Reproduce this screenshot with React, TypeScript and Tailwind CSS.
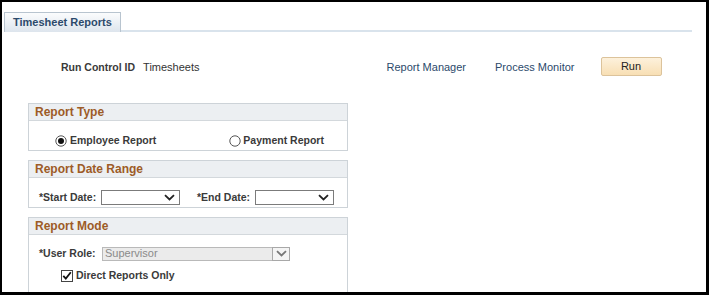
// PeopleSoft-style Timesheet Reports run control page
const font = { fontFamily: '"Liberation Sans", Arial, sans-serif' };

const Chevron = ({ color = '#222' }: { color?: string }) => (
  <svg width="11" height="7" viewBox="0 0 11 7">
    <path d="M1 1.2 L5.5 5.5 L10 1.2" fill="none" stroke={color} strokeWidth="1.8" />
  </svg>
);

const Radio = ({ checked }: { checked?: boolean }) => (
  <svg width="12" height="12" viewBox="0 0 12 12" className="shrink-0">
    <circle cx="6" cy="6" r="5.2" fill="#fff" stroke="#555" strokeWidth="1" />
    {checked && <circle cx="6" cy="6" r="3" fill="#111" />}
  </svg>
);

const Checkbox = () => (
  <svg width="12" height="12" viewBox="0 0 12 12" className="shrink-0">
    <rect x="0.5" y="0.5" width="11" height="11" fill="#fff" stroke="#444" />
    <path d="M2.3 5.8 L4.8 8.6 L9.8 2.2" fill="none" stroke="#111" strokeWidth="1.8" />
  </svg>
);

const DateSelect = () => (
  <div className="w-[79px] h-[15px] border border-[#7b7b7b] bg-white flex items-center justify-end pr-[4px]">
    <Chevron />
  </div>
);

const GroupBox = ({ title, className, children }: { title: string; className: string; children: React.ReactNode }) => (
  <div className={`w-[320px] border border-[#cdd3d8] ${className}`}>
    <div className="h-[17px] bg-[#eceff2] border-b border-[#d3d8dc] pl-[6px] flex items-center">
      <span className="text-[12px] font-bold text-[#9d5b27] leading-none">{title}</span>
    </div>
    {children}
  </div>
);

const label = 'text-[10.5px] font-bold text-[#3a3a3a]';

export default function App() {
  return (
    <div
      className="w-[709px] h-[295px] bg-white border-t-2 border-l-2 border-r-[3px] border-b-[3px] border-black overflow-hidden text-[#333]"
      style={font}
    >
      {/* Tab strip */}
      <div className="mt-[10px] flex items-end pl-[2px] pr-[14px]">
        <div className="h-[20px] px-[8px] flex items-center border border-b-0 border-[#b8c4cf] bg-gradient-to-b from-[#fbfcfd] to-[#dde5ed]">
          <span className="text-[11px] font-bold text-[#2c4a6b]">Timesheet Reports</span>
        </div>
        <div className="flex-1 h-[2px] bg-[#d9e3ec]" />
      </div>

      {/* Run control row */}
      <div className="mt-[25px] h-[19px] flex items-center pt-[2px]">
        <span className={`ml-[59px] ${label}`}>Run Control ID</span>
        <span className="ml-[8px] text-[11px] text-[#333]">Timesheets</span>
        <span className="ml-[187px] text-[11px] text-[#2c4a6b]">Report Manager</span>
        <span className="ml-[29px] text-[11px] text-[#2c4a6b]">Process Monitor</span>
        <button className="ml-[26px] -mt-[2px] w-[61px] h-[19px] border border-[#dcc39b] rounded-[2px] bg-gradient-to-b from-[#fdf1dc] to-[#f8dfb4] text-[11px] text-[#222] leading-none">
          Run
        </button>
      </div>

      <div className="ml-[26px] mt-[27px] flex flex-col">
        <GroupBox title="Report Type" className="h-[48px]">
          <div className="flex items-center pt-[12px]">
            <div className="ml-[26px] flex items-center gap-[3px]">
              <Radio checked />
              <span className={label}>Employee Report</span>
            </div>
            <div className="ml-[73px] flex items-center gap-[2px]">
              <Radio />
              <span className={label}>Payment Report</span>
            </div>
          </div>
        </GroupBox>

        <GroupBox title="Report Date Range" className="mt-[9px] h-[48px]">
          <div className="flex items-center pt-[12px]">
            <span className={`ml-[10px] w-[62px] ${label}`}>*Start Date:</span>
            <DateSelect />
            <span className={`ml-[17px] w-[58px] ${label}`}>*End Date:</span>
            <DateSelect />
          </div>
        </GroupBox>

        <GroupBox title="Report Mode" className="mt-[9px] h-[76px]">
          <div className="flex items-center pt-[11px]">
            <span className={`ml-[10px] w-[63px] ${label}`}>*User Role:</span>
            <div className="w-[188px] h-[14px] border border-[#b9b9b9] bg-[#ebebeb] flex items-center justify-between">
              <span className="pl-[2px] text-[11px] text-[#8a8a8a] leading-none">Supervisor</span>
              <div className="w-[18px] h-[14px] border border-[#a8a8a8] bg-[#f4f4f4] flex items-center justify-center -mr-px">
                <Chevron color="#777" />
              </div>
            </div>
          </div>
          <div className="flex items-center mt-[6px] ml-[32px] gap-[3px]">
            <Checkbox />
            <span className={label}>Direct Reports Only</span>
          </div>
        </GroupBox>
      </div>
    </div>
  );
}
